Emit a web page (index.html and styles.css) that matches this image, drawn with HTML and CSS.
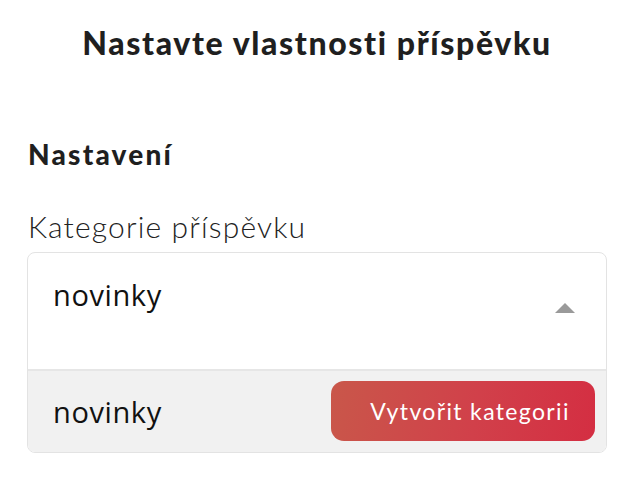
FILE: index.html
```html
<!DOCTYPE html>
<html>
<head>
	<title>Nastavte vlastnosti příspěvku</title>
	<link rel="stylesheet" href="styles.css">
</head>
<body>
	<div class='page'>
		<h1 class='title'>Nastavte vlastnosti příspěvku</h1>

		<h2 class='section'>Nastavení</h2>

		<label class='field-label'>Kategorie příspěvku</label>
		<div class='select'>
			<div class='select-value'>
				<span>novinky</span>
				<span class='arrow'></span>
			</div>
			<div class='select-option'>
				<span>novinky</span>
				<button type="button" class='btn-create'>Vytvořit kategorii</button>
			</div>
		</div>
	</div>
</body>
</html>
```

FILE: styles.css
```css
body{
	margin: 0;
	background: #fff;
	color: #222;
	font-family: "Lato", "Open Sans", sans-serif;
}
.page{
	padding: 23px 17px 0 27px;
}
.title{
	margin: 0;
	text-align: center;
	font-size: 32px;
	font-weight: 900;
	letter-spacing: 1.6px;
	line-height: 40px;
	color: #1f1f1f;
}
.section{
	margin: 74px 0 0 1px;
	font-size: 28px;
	font-weight: 900;
	letter-spacing: 2.2px;
	line-height: 34px;
	color: #1f1f1f;
}
.field-label{
	display: block;
	margin: 37px 0 0 1px;
	font-size: 30px;
	font-weight: 300;
	letter-spacing: 1.15px;
	line-height: 36px;
	color: #222;
}
.select{
	margin-top: 8px;
	border: 1px solid #e3e3e3;
	border-radius: 8px;
	overflow: hidden;
	font-family: "Open Sans", "Noto Sans", sans-serif;
	font-size: 29px;
	letter-spacing: 0.6px;
	color: #111;
}
.select-value{
	height: 116px;
	padding: 0 31px 0 25px;
	display: flex;
	justify-content: space-between;
	align-items: flex-start;
	border-bottom: 2px solid #e6e6e6;
}
.select-value > span:first-child{
	margin-top: 22px;
}
.arrow{
	margin-top: 50px;
	width: 0;
	height: 0;
	border-left: 10px solid transparent;
	border-right: 10px solid transparent;
	border-bottom: 10px solid #9a9a9a;
}
.select-option{
	height: 81px;
	background: #f1f1f1;
	padding: 0 11px 0 25px;
	display: flex;
	justify-content: space-between;
	align-items: center;
}
.btn-create{
	height: 60px;
	width: 264px;
	border: none;
	border-radius: 13px;
	background: linear-gradient(100deg, #c9574a 0%, #d1404a 55%, #d42e42 100%);
	color: #fff;
	font-family: "Lato", sans-serif;
	font-size: 23px;
	letter-spacing: 1.35px;
	padding: 0 0 0 14px;
	margin-top: -2px;
}
```
